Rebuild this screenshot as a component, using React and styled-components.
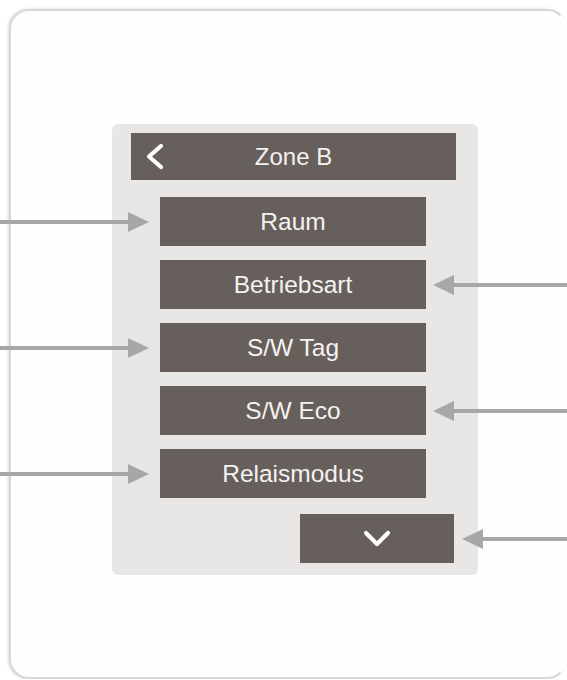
import styled, { createGlobalStyle } from 'styled-components';

const GlobalStyle = createGlobalStyle`
  html, body {
    margin: 0;
    padding: 0;
    background: #ffffff;
    overflow: hidden;
  }
  body {
    font-family: "Liberation Sans", Arial, sans-serif;
  }
`;

const Card = styled.div`
  box-sizing: border-box;
  margin: 9px 0 0 9px;
  width: 558px;
  height: 670px;
  border: 2px solid #dcd6d3;
  border-right-color: transparent;
  border-radius: 20px;
  box-shadow: -1px 0 3px rgba(120, 105, 100, 0.25);
  background: #fefefe;
  padding: 113px 0 0 101px;
`;

const Panel = styled.div`
  box-sizing: border-box;
  width: 366px;
  height: 451px;
  background: #e8e7e6;
  border-radius: 6px;
  padding: 9px 22px 0 19px;
  display: flex;
  flex-direction: column;
`;

const Header = styled.div`
  position: relative;
  height: 47px;
  background: #675f5b;
  display: flex;
  align-items: center;
  justify-content: center;
  color: #f4f2f1;
  font-size: 24px;
  margin-bottom: 17px;

  svg {
    position: absolute;
    left: 13px;
    top: 10px;
  }
`;

const MenuList = styled.div`
  display: flex;
  flex-direction: column;
  gap: 14px;
  padding-left: 29px;
`;

const MenuButton = styled.div`
  position: relative;
  box-sizing: border-box;
  width: ${({ $wide }) => ($wide ? '154px' : '266px')};
  height: 49px;
  background: #675f5b;
  color: #f4f2f1;
  font-size: 24.5px;
  display: flex;
  align-items: center;
  justify-content: center;
  align-self: ${({ $wide }) => ($wide ? 'flex-end' : 'flex-start')};
  margin-top: ${({ $wide }) => ($wide ? '2px' : '0')};
  margin-right: ${({ $wide }) => ($wide ? '2px' : '0')};
`;

const ArrowBox = styled.div`
  position: absolute;
  top: 50%;
  transform: translateY(-50%);
  height: 20px;
  display: flex;
  align-items: center;
  flex-direction: ${({ $side }) => ($side === 'left' ? 'row' : 'row-reverse')};
  ${({ $side, $gap }) => ($side === 'left' ? `right: calc(100% + ${$gap}px);` : `left: calc(100% + ${$gap}px);`)}
  width: ${({ $length }) => $length}px;
`;

const Shaft = styled.div`
  flex: 1;
  height: 4px;
  background: #a7a7a7;
`;

const Head = styled.div`
  width: 0;
  height: 0;
  border-top: 10px solid transparent;
  border-bottom: 10px solid transparent;
  ${({ $side }) => ($side === 'left' ? 'border-left: 21px solid #a7a7a7;' : 'border-right: 21px solid #a7a7a7;')}
`;

const Arrow = ({ side, gap, length }) => (
  <ArrowBox $side={side} $gap={gap} $length={length}>
    <Shaft />
    <Head $side={side} />
  </ArrowBox>
);

const items = [
  { label: 'Raum', arrow: 'left' },
  { label: 'Betriebsart', arrow: 'right' },
  { label: 'S/W Tag', arrow: 'left' },
  { label: 'S/W Eco', arrow: 'right' },
  { label: 'Relaismodus', arrow: 'left' },
];

const App = () => (
  <>
    <GlobalStyle />
    <Card>
      <Panel>
        <Header>
          <svg width="24" height="28" viewBox="0 0 24 28">
            <polyline
              points="17,3 5,13.5 17,24"
              fill="none"
              stroke="#ffffff"
              strokeWidth="4.2"
              strokeLinecap="round"
              strokeLinejoin="round"
            />
          </svg>
          Zone B
        </Header>
        <MenuList>
          {items.map((item) => (
            <MenuButton key={item.label}>
              {item.arrow === 'left' ? (
                <Arrow side="left" gap={11} length={149} />
              ) : (
                <Arrow side="right" gap={7} length={134} />
              )}
              {item.label}
            </MenuButton>
          ))}
          <MenuButton $wide>
            <Arrow side="right" gap={8} length={105} />
            <svg width="28" height="20" viewBox="0 0 28 20">
              <polyline
                points="3,4 14,15 25,4"
                fill="none"
                stroke="#ffffff"
                strokeWidth="4.2"
                strokeLinecap="round"
                strokeLinejoin="round"
              />
            </svg>
          </MenuButton>
        </MenuList>
      </Panel>
    </Card>
  </>
);

export default App;
